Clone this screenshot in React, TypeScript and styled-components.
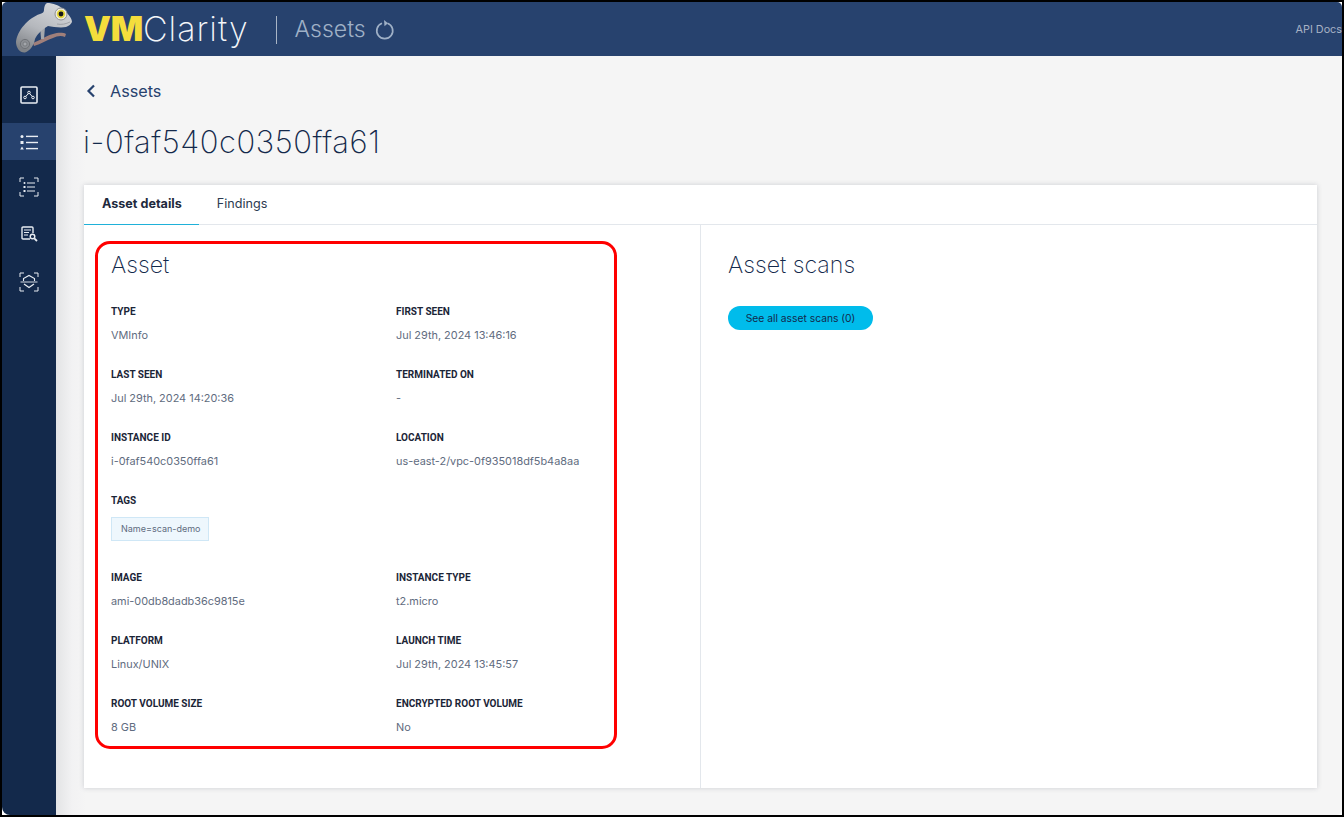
import React from 'react';
import styled, { createGlobalStyle } from 'styled-components';

const Global = createGlobalStyle`
  html, body { margin: 0; padding: 0; background: #fff; }
  body { font-family: Inter, "Liberation Sans", sans-serif; overflow: hidden; }
  * { box-sizing: border-box; }
`;

const Frame = styled.div`
  position: relative;
  width: 1344px;
  height: 817px;
  border: 2px solid #000;
  background: #fff;
  overflow: hidden;
`;
const Shell = styled.div`
  width: 100%;
  height: 100%;
  display: flex;
  flex-direction: column;
  border-radius: 5px;
  overflow: hidden;
`;
const Header = styled.header`
  height: 54px;
  flex: none;
  background: #27426e;
  display: flex;
  align-items: center;
  padding-left: 13px;
  position: relative;
`;
const Brand = styled.div`
  display: flex;
  align-items: baseline;
  margin-left: 9px;
  line-height: 54px;
`;
const BrandVM = styled.span`
  color: #f4dd3c;
  font-weight: 900;
  font-family: Inter, sans-serif;
  font-size: 34px;
  letter-spacing: -0.3px;
`;
const BrandRest = styled.span`
  color: #f4f6f9;
  font-weight: 200;
  font-family: Inter, sans-serif;
  font-size: 34px;
  letter-spacing: 1px;
`;
const HeaderRule = styled.div`
  width: 1px;
  height: 28px;
  background: #a9b5c6;
  margin: 2px 18px 0 27px;
`;
const HeaderTitle = styled.div`
  color: #9fb0c6;
  font-size: 23px;
  font-weight: 300;
  margin-right: 9px;
`;
const ApiDocs = styled.a`
  margin-left: auto;
  color: #a7b3c5;
  font-size: 10.8px;
  font-family: Inter, sans-serif;
  white-space: nowrap;
`;
const Body = styled.div`
  flex: 1;
  display: flex;
  min-height: 0;
`;
const Sidebar = styled.nav`
  width: 54px;
  flex: none;
  background: #13294b;
  padding-top: 20px;
  display: flex;
  flex-direction: column;
  border-bottom-left-radius: 8px;
`;
const NavItem = styled.div<{ $active?: boolean; $nudge?: number }>`
  height: 37px;
  margin-bottom: 10px;
  padding-bottom: ${p => p.$nudge ?? 0}px;
  display: flex;
  align-items: center;
  justify-content: center;
  background: ${p => (p.$active ? '#27426e' : 'transparent')};
  color: #e9edf3;
`;
const Main = styled.main`
  flex: 1;
  min-width: 0;
  background: linear-gradient(to right, #e3e4e5 0, #f2f2f3 16px, #f5f5f5 30px);
  padding: 0 25px 0 28px;
  display: flex;
  flex-direction: column;
`;
const Back = styled.div`
  height: 70px;
  display: flex;
  align-items: center;
  color: #27426e;
  font-size: 16.2px;
  gap: 13px;
  padding-left: 1px;
`;
const Title = styled.h1`
  margin: 0 0 0 -1px;
  height: 59px;
  font-size: 31px;
  line-height: 32px;
  font-weight: 200;
  letter-spacing: 0.55px;
  color: #13294b;
`;
const Card = styled.section`
  width: 1233px;
  height: 603px;
  background: #fff;
  box-shadow: 0 0 5px rgba(60, 70, 90, 0.22);
  display: flex;
  flex-direction: column;
`;
const Tabs = styled.div`
  height: 40px;
  flex: none;
  display: flex;
  border-bottom: 1px solid #e3e7ec;
`;
const Tab = styled.div<{ $active?: boolean }>`
  height: 40px;
  padding: 0 ${p => (p.$active ? 17 : 18)}px 2px 18px;
  display: flex;
  align-items: center;
  font-size: 12.6px;
  font-weight: ${p => (p.$active ? 700 : 400)};
  color: ${p => (p.$active ? '#1e2a3d' : '#2c3a50')};
  border-bottom: 1px solid ${p => (p.$active ? '#1fb1d9' : 'transparent')};
`;
const Columns = styled.div`
  flex: 1;
  display: grid;
  grid-template-columns: 617px 1fr;
  min-height: 0;
`;
const LeftCol = styled.div`
  padding: 26px 0 0 27px;
  border-right: 1px solid #e3e7ec;
`;
const RightCol = styled.div`
  padding: 26px 0 0 27px;
`;
const Heading = styled.h2`
  margin: 0;
  font-size: 23.2px;
  line-height: 29px;
  font-weight: 200;
  color: #13294b;
`;
const Fields = styled.div`
  display: grid;
  grid-template-columns: 285px 230px;
  margin-top: 25px;
`;
const Field = styled.div<{ $tall?: boolean }>`
  height: ${p => (p.$tall ? 77 : 63)}px;
`;
const Label = styled.div`
  font-family: Roboto, Inter, sans-serif;
  font-size: 10px;
  line-height: 14px;
  font-weight: 700;
  color: #1b2537;
  text-transform: uppercase;
  margin-bottom: 9px;
`;
const Value = styled.div`
  font-size: 10.9px;
  line-height: 14px;
  color: #5f6c80;
  white-space: nowrap;
`;
const TagPill = styled.span`
  display: block;
  height: 24px;
  width: 98px;
  margin-top: 1px;
  padding: 0 9px;
  background: #eef7fd;
  border: 1px solid #cfe7f6;
  font-size: 9px;
  line-height: 22px;
  color: #5f6c80;
  white-space: nowrap;
`;
const ScanButton = styled.button`
  display: block;
  margin-top: 26px;
  width: 145px;
  height: 24px;
  border: 0;
  border-radius: 12px;
  background: #00bceb;
  color: #13294b;
  font-family: Inter, sans-serif;
  font-size: 10.3px;
  padding: 0;
`;
const Highlight = styled.div`
  position: absolute;
  left: 93px;
  top: 239px;
  width: 522px;
  height: 508px;
  border: 3px solid #f00;
  border-radius: 15px;
  pointer-events: none;
`;

const Chameleon = () => (
  <svg width="60" height="52" viewBox="0 0 60 52" style={{ flex: 'none' }}>
    <defs>
      <linearGradient id="cb" x1="0.75" y1="0" x2="0.25" y2="1">
        <stop offset="0" stopColor="#d6d8dc" />
        <stop offset="0.55" stopColor="#b5b8bd" />
        <stop offset="1" stopColor="#7f8287" />
      </linearGradient>
    </defs>
    <path d="M18 40 C28 36 30 33 38 31 C42 30 47 29 51 31 L50 34 C46 32 42 33 38 35 C32 37 26 41 19 43 Z" fill="#a07f7a" />
    <path d="M25 22 L26 36 L29 36 L30 24 Z" fill="#a4a7ac" />
    <path d="M1 39 C2 28 13 15 25 11 C28 10 29 9 29 7 C29 4 30 1 32 0 C38 0 44 2 49 7 C53 11 57 15 57 19 C56 21 54 23 51 24 C46 25 38 24 33 23 C28 26 22 31 20 36 C19 42 15 48 10 49.5 C5 50 1 45 1 39 Z" fill="url(#cb)" />
    <path d="M42 21 C46 22 51 21 55 19" stroke="#8e9196" strokeWidth="0.7" fill="none" />
    <circle cx="10" cy="41" r="4.6" fill="#8b8e93" stroke="#6f7277" />
    <circle cx="10" cy="41" r="2" fill="#a4a7ac" stroke="#6f7277" strokeWidth="0.7" />
    <circle cx="46" cy="11" r="6" fill="#efece0" stroke="#8e9196" />
    <circle cx="46" cy="11" r="4.2" fill="#e3d63a" />
    <circle cx="46" cy="11" r="2.4" fill="#17181a" />
  </svg>
);

const Refresh = () => (
  <svg width="20" height="22" viewBox="0 0 20 22" fill="none" stroke="#9fb0c6" strokeWidth="1.7" style={{ marginTop: 1 }}>
    <path d="M12.5 4.2 A8 8 0 1 1 7 4.2" />
    <path d="M9 1 L13 4.2 L9.5 7.2 Z" fill="#9fb0c6" stroke="none" />
  </svg>
);

const Dashboard = () => (
  <svg width="18" height="18" viewBox="0 0 18 18" fill="none" stroke="currentColor">
    <rect x="1" y="1" width="16" height="16" strokeWidth="1.6" rx="1" />
    <circle cx="5" cy="11.5" r="1.3" strokeWidth="1" />
    <circle cx="9" cy="6.5" r="1.3" strokeWidth="1" />
    <circle cx="13" cy="11.5" r="1.3" strokeWidth="1" />
    <path d="M5.8 10.5 L8.2 7.6 M9.8 7.6 L12.2 10.5" strokeWidth="1" />
  </svg>
);
const ListIcon = () => (
  <svg width="18" height="16" viewBox="0 0 18 16" fill="currentColor">
    <rect x="0.5" y="1" width="3" height="3" rx="1.5" />
    <rect x="0.5" y="7" width="3" height="3" />
    <path d="M2 12.5 L3.8 15.5 H0.2 Z" />
    <rect x="6" y="1.7" width="12" height="1.4" />
    <rect x="6" y="7.8" width="12" height="1.4" />
    <rect x="6" y="13.9" width="12" height="1.4" />
  </svg>
);
const Corners = () => (
  <path d="M1 5 V1 H5 M15 1 H19 V5 M1 15 V19 H5 M15 19 H19 V15" fill="none" stroke="currentColor" strokeWidth="1" />
);
const ScanList = () => (
  <svg width="20" height="20" viewBox="0 0 20 20" fill="currentColor">
    <Corners />
    <rect x="4.5" y="5" width="2" height="2" rx="1" />
    <rect x="4.5" y="9" width="2" height="2" />
    <rect x="4.5" y="13" width="2" height="2" />
    <rect x="8" y="5.5" width="8" height="1" />
    <rect x="8" y="9.5" width="8" height="1" />
    <rect x="8" y="13.5" width="8" height="1" />
  </svg>
);
const ReportSearch = () => (
  <svg width="17" height="16" viewBox="0 0 17 16" fill="none" stroke="currentColor">
    <path d="M9 13 H2 Q1 13 1 12 V2 Q1 1 2 1 H11 Q12 1 12 2 V7" strokeWidth="1.4" />
    <path d="M3 4 H10 M3 6.5 H8 M3 9 H7" strokeWidth="1.1" />
    <circle cx="11.5" cy="10.5" r="2.3" strokeWidth="1.4" />
    <path d="M13.3 12.3 L16 15" strokeWidth="1.8" />
  </svg>
);
const ShieldScan = () => (
  <svg width="20" height="20" viewBox="0 0 20 20" fill="none" stroke="currentColor">
    <Corners />
    <path d="M4.5 9 V6.5 L10 3.5 L15.5 6.5 V9" strokeWidth="1.1" />
    <path d="M1.5 10 H18.5" strokeWidth="0.9" />
    <path d="M5 12 L10 15.5 L15 12" strokeWidth="1.3" />
  </svg>
);
const Chevron = () => (
  <svg width="10" height="14" viewBox="0 0 10 14" fill="none" stroke="#27426e" strokeWidth="2.2" style={{ marginLeft: 1, marginRight: 1 }}>
    <path d="M8 1.5 L2.5 7 L8 12.5" />
  </svg>
);

const fields: { label: string; value?: string; tag?: string; tall?: boolean }[] = [
  { label: 'Type', value: 'VMInfo' },
  { label: 'First seen', value: 'Jul 29th, 2024 13:46:16' },
  { label: 'Last seen', value: 'Jul 29th, 2024 14:20:36' },
  { label: 'Terminated on', value: '-' },
  { label: 'Instance ID', value: 'i-0faf540c0350ffa61' },
  { label: 'Location', value: 'us-east-2/vpc-0f935018df5b4a8aa' },
  { label: 'Tags', tag: 'Name=scan-demo', tall: true },
  { label: '', tall: true },
  { label: 'Image', value: 'ami-00db8dadb36c9815e' },
  { label: 'Instance type', value: 't2.micro' },
  { label: 'Platform', value: 'Linux/UNIX' },
  { label: 'Launch time', value: 'Jul 29th, 2024 13:45:57' },
  { label: 'Root volume size', value: '8 GB' },
  { label: 'Encrypted root volume', value: 'No' },
];

export default function App() {
  return (
    <Frame>
      <Global />
      <Shell>
        <Header>
          <Chameleon />
          <Brand>
            <BrandVM>VM</BrandVM>
            <BrandRest>Clarity</BrandRest>
          </Brand>
          <HeaderRule />
          <HeaderTitle>Assets</HeaderTitle>
          <Refresh />
          <ApiDocs>API Docs</ApiDocs>
        </Header>
        <Body>
          <Sidebar>
            <NavItem><Dashboard /></NavItem>
            <NavItem $active><ListIcon /></NavItem>
            <NavItem $nudge={4}><ScanList /></NavItem>
            <NavItem $nudge={4}><ReportSearch /></NavItem>
            <NavItem $nudge={2}><ShieldScan /></NavItem>
          </Sidebar>
          <Main>
            <Back><Chevron />Assets</Back>
            <Title>i-0faf540c0350ffa61</Title>
            <Card>
              <Tabs>
                <Tab $active>Asset details</Tab>
                <Tab>Findings</Tab>
              </Tabs>
              <Columns>
                <LeftCol>
                  <Heading>Asset</Heading>
                  <Fields>
                    {fields.map((f, i) => (
                      <Field key={i} $tall={f.tall}>
                        {f.label && <Label>{f.label}</Label>}
                        {f.value && <Value>{f.value}</Value>}
                        {f.tag && <TagPill>{f.tag}</TagPill>}
                      </Field>
                    ))}
                  </Fields>
                </LeftCol>
                <RightCol>
                  <Heading>Asset scans</Heading>
                  <ScanButton>See all asset scans (0)</ScanButton>
                </RightCol>
              </Columns>
            </Card>
          </Main>
        </Body>
      </Shell>
      <Highlight />
    </Frame>
  );
}
